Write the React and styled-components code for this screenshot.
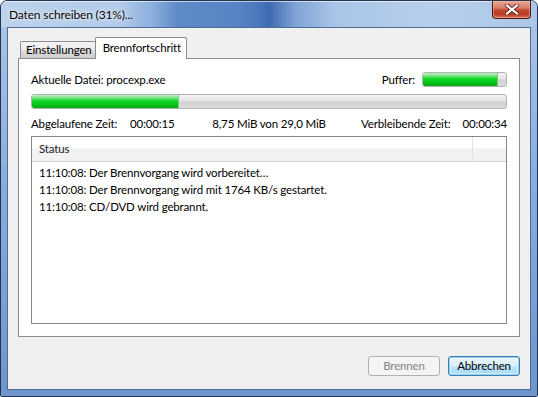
import React from "react";
import styled, { createGlobalStyle } from "styled-components";

const FONT = `Lato, "Noto Sans", "Liberation Sans", sans-serif`;

const GlobalStyle = createGlobalStyle`
  html, body {
    margin: 0;
    padding: 0;
    background: #ffffff;
  }
  body {
    font-family: ${FONT};
    font-size: 11.5px;
    letter-spacing: -0.15px;
    color: #000;
  }
`;

const Window = styled.div`
  width: 538px;
  height: 397px;
  box-sizing: border-box;
  border: 1px solid #24344f;
  border-radius: 7px 7px 2px 2px;
  overflow: hidden;
  display: flex;
  flex-direction: column;
  background: #6f97cd;
  box-shadow: inset 0 0 0 1px rgba(255, 255, 255, 0.55);
`;

const TitleBar = styled.div`
  height: 25px;
  flex-shrink: 0;
  display: flex;
  justify-content: space-between;
  align-items: flex-start;
  padding: 0 6px 0 8px;
  background: linear-gradient(
    90deg,
    #bcd2ed 0%,
    #b2cbea 22%,
    #8db0dd 28%,
    #5f8ac8 33%,
    #5984c5 44%,
    #4a78bb 48%,
    #3d6bb0 50%,
    #7fa3d6 55%,
    #a9c4e7 62%,
    #b7cfec 80%,
    #abc6e8 100%
  );
  border-top: 1px solid rgba(255, 255, 255, 0.6);
`;

const Title = styled.span`
  font-size: 12px;
  line-height: 26px;
  color: #000;
  text-shadow: 0 0 6px rgba(255, 255, 255, 0.9), 0 0 2px rgba(255, 255, 255, 0.9);
`;

const CloseButton = styled.div`
  width: 39px;
  height: 18px;
  margin-top: -1px;
  box-sizing: border-box;
  border: 1px solid #4a1a12;
  border-top: none;
  border-radius: 0 0 4px 4px;
  background: linear-gradient(180deg, #e8a593 0%, #d98067 40%, #c2452c 55%, #bd3f25 80%, #d9785a 100%);
  box-shadow: inset 0 0 0 1px rgba(255, 200, 190, 0.45);
  display: flex;
  align-items: center;
  justify-content: center;
`;

const Frame = styled.div`
  flex: 1;
  display: flex;
  padding: 0 6px 6px 6px;
  background: linear-gradient(180deg, #a9c3e6 0%, #8aaedd 40%, #6d96cd 100%);
`;

const Client = styled.div`
  flex: 1;
  display: flex;
  flex-direction: column;
  background: #f0f0f0;
  border: 1px solid #4d6c98;
  padding: 10px 10px 13px 10px;
`;

const TabStrip = styled.div`
  display: flex;
  align-items: flex-end;
  height: 20px;
  padding-left: 2px;
  position: relative;
  z-index: 1;
`;

const Tab = styled.div`
  box-sizing: border-box;
  height: ${(p) => (p.$active ? "22px" : "17px")};
  padding: ${(p) => (p.$active ? "2px 5px 0 7px" : "0 4px 0 5px")};
  margin-left: ${(p) => (p.$active ? "-2px" : "0")};
  margin-bottom: ${(p) => (p.$active ? "-1px" : "0")};
  border: 1px solid #898c95;
  border-bottom: none;
  border-radius: 2px 2px 0 0;
  background: ${(p) =>
    p.$active ? "#ffffff" : "linear-gradient(180deg, #f3f3f3 0%, #ebebeb 50%, #dddddd 51%, #cfcfcf 100%)"};
  line-height: 16px;
  white-space: nowrap;
`;

const Panel = styled.div`
  height: 279px;
  box-sizing: border-box;
  background: #ffffff;
  border: 1px solid #898c95;
  padding: 12px;
  display: flex;
  flex-direction: column;
`;

const Row = styled.div`
  display: flex;
  align-items: center;
  justify-content: space-between;
  height: 16px;
`;

const Label = styled.span`
  white-space: nowrap;
`;

const Group = styled.div`
  display: flex;
  align-items: center;
  gap: ${(p) => p.$gap ?? 7}px;
  justify-self: ${(p) => p.$justify || "start"};
`;

const Bar = styled.div`
  box-sizing: border-box;
  width: ${(p) => (p.$width ? `${p.$width}px` : "100%")};
  height: 15px;
  border: 1px solid #b2b2b2;
  border-radius: 3px;
  background: linear-gradient(180deg, #f3f3f3 0%, #e4e4e4 45%, #d0d0d0 55%, #dcdcdc 100%);
  overflow: hidden;
  margin-top: ${(p) => p.$mt || 0}px;
  flex-shrink: 0;
`;

const Fill = styled.div`
  height: 100%;
  background: linear-gradient(
    180deg,
    #c3f1c7 0%,
    #6fe07a 25%,
    #0ed722 45%,
    #07c71a 70%,
    #03a910 100%
  );
  border-right: 1px solid #6fcf78;
  box-sizing: border-box;
`;

const TimesRow = styled.div`
  display: grid;
  grid-template-columns: 1fr auto 1fr;
  align-items: center;
  height: 16px;
  margin-top: 6px;
`;

const ListBox = styled.div`
  margin-top: 5px;
  height: 188px;
  box-sizing: border-box;
  border: 1px solid #828790;
  display: flex;
  flex-direction: column;
`;

const Header = styled.div`
  display: grid;
  grid-template-columns: 1fr 33px;
  height: 24px;
  border-bottom: 1px solid #d5d5d5;
  background: linear-gradient(180deg, #ffffff 0%, #ffffff 45%, #f1f2f4 50%, #f1f2f4 100%);
`;

const HeaderCell = styled.div`
  padding-left: 7px;
  line-height: 24px;
  color: #1b1b1b;
  border-right: ${(p) => (p.$divider ? "1px solid #e3e4e6" : "none")};
`;

const LogList = styled.div`
  padding: 2px 7px;
`;

const LogLine = styled.div`
  line-height: 17px;
  white-space: nowrap;
`;

const ButtonRow = styled.div`
  display: flex;
  justify-content: flex-end;
  gap: 8px;
  margin-top: auto;
`;

const Button = styled.div`
  width: 72px;
  height: 20px;
  box-sizing: border-box;
  border-radius: 3px;
  line-height: 18px;
  text-align: center;
  border: 1px solid ${(p) => (p.$disabled ? "#adb2b5" : "#3c7fb1")};
  color: ${(p) => (p.$disabled ? "#838383" : "#000")};
  background: ${(p) =>
    p.$disabled
      ? "#f4f4f4"
      : "linear-gradient(180deg, #eaf6fd 0%, #d9f0fc 50%, #bee6fd 51%, #a7d9f5 100%)"};
  box-shadow: ${(p) => (p.$disabled ? "none" : "inset 0 0 0 1px #8ed0f3, inset 0 0 0 2px rgba(255,255,255,0.5)")};
`;

const logs = [
  "11:10:08: Der Brennvorgang wird vorbereitet…",
  "11:10:08: Der Brennvorgang wird mit 1764 KB/s gestartet.",
  "11:10:08: CD/DVD wird gebrannt.",
];

export default function App() {
  return (
    <>
      <GlobalStyle />
      <Window>
        <TitleBar>
          <Title>Daten schreiben (31%)...</Title>
          <CloseButton>
            <svg width="14" height="11" viewBox="0 0 14 11">
              <path d="M2 1.5 L12 9.5 M12 1.5 L2 9.5" stroke="#5a2a22" strokeWidth="4" strokeLinecap="square" />
              <path d="M2 1.5 L12 9.5 M12 1.5 L2 9.5" stroke="#ffffff" strokeWidth="2.2" strokeLinecap="square" />
            </svg>
          </CloseButton>
        </TitleBar>
        <Frame>
          <Client>
            <TabStrip>
              <Tab>Einstellungen</Tab>
              <Tab $active>Brennfortschritt</Tab>
            </TabStrip>
            <Panel>
              <Row>
                <Label>Aktuelle Datei: procexp.exe</Label>
                <Group>
                  <Label>Puffer:</Label>
                  <Bar $width={85}>
                    <Fill style={{ width: "90%" }} />
                  </Bar>
                </Group>
              </Row>
              <Bar $mt={7}>
                <Fill style={{ width: "31%" }} />
              </Bar>
              <TimesRow>
                <Group $gap={0}>
                  <Label style={{ width: 99 }}>Abgelaufene Zeit:</Label>
                  <Label>00:00:15</Label>
                </Group>
                <Label>8,75 MiB von 29,0 MiB</Label>
                <Group $gap={12} $justify="end">
                  <Label>Verbleibende Zeit:</Label>
                  <Label>00:00:34</Label>
                </Group>
              </TimesRow>
              <ListBox>
                <Header>
                  <HeaderCell $divider>Status</HeaderCell>
                  <HeaderCell />
                </Header>
                <LogList>
                  {logs.map((l) => (
                    <LogLine key={l}>{l}</LogLine>
                  ))}
                </LogList>
              </ListBox>
            </Panel>
            <ButtonRow>
              <Button $disabled>Brennen</Button>
              <Button>Abbrechen</Button>
            </ButtonRow>
          </Client>
        </Frame>
      </Window>
    </>
  );
}
